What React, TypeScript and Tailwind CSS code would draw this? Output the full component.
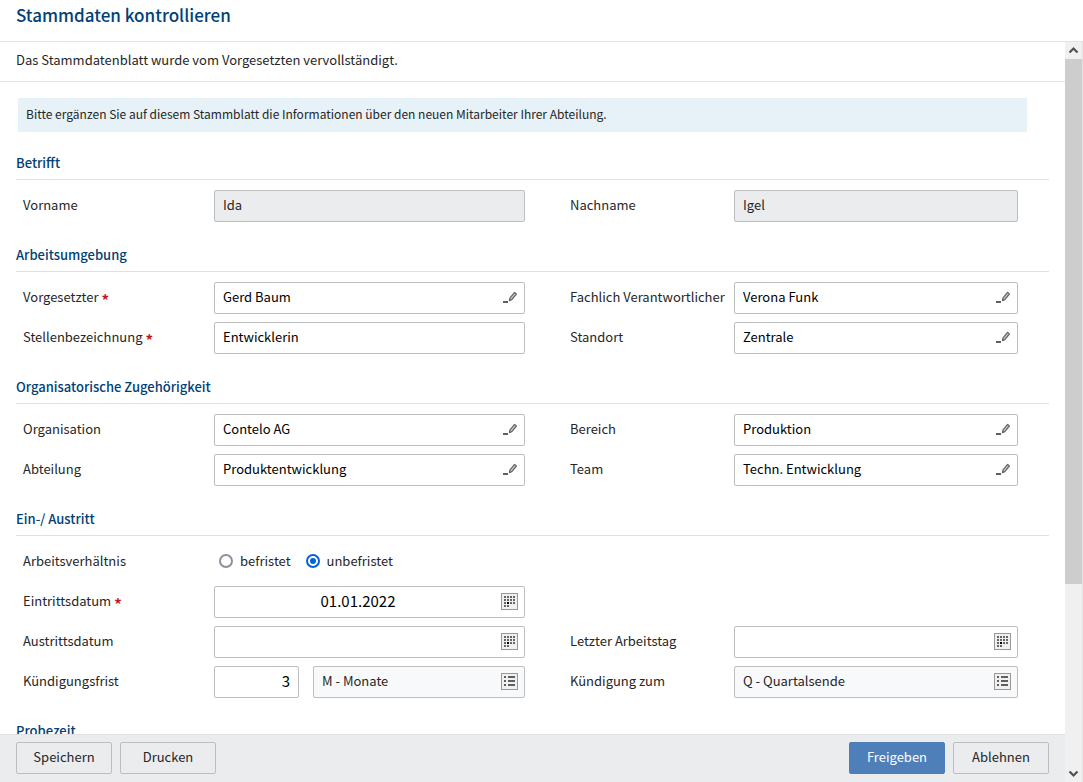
import type { ReactNode } from "react";

function PencilIcon() {
  return (
    <svg width="17" height="17" viewBox="0 0 17 17" aria-hidden="true">
      <rect x="2" y="12" width="5" height="2" fill="#5f5f5f" />
      <path d="M8.4 11.6 L9 8.8 L13.6 3.4 L15.4 5 L10.8 10.6 Z" fill="#c9c9c9" stroke="#636363" strokeWidth="1.2" strokeLinejoin="round" />
    </svg>
  );
}

const days = [
  [0, 0], [1, 0], [2, 0], [3, 0],
  [0, 1], [1, 1], [2, 1], [3, 1],
  [0, 2], [1, 2], [2, 2], [3, 2],
  [0, 3], [1, 3],
];

function CalendarIcon() {
  return (
    <svg width="17" height="17" viewBox="0 0 17 17" shapeRendering="crispEdges" aria-hidden="true">
      <rect x="0.5" y="0.5" width="16" height="16" fill="#f0f0f0" stroke="#999999" />
      {days.map(([c, r]) => (
        <rect key={`${c}-${r}`} x={3 + c * 3} y={3 + r * 3} width="2" height="2" fill={c === 1 && r === 2 ? "#000000" : "#666666"} />
      ))}
    </svg>
  );
}

function ListIcon() {
  return (
    <svg width="17" height="17" viewBox="0 0 17 17" shapeRendering="crispEdges" aria-hidden="true">
      <rect x="0.5" y="0.5" width="16" height="16" fill="#f0f0f0" stroke="#999999" />
      {[3, 7, 11].map((y) => (
        <g key={y} fill="#5f5f5f">
          <rect x="3" y={y} width="2" height="2" />
          <rect x="7" y={y} width="7" height="2" />
        </g>
      ))}
    </svg>
  );
}

type Kind = "text" | "readonly" | "picker" | "date" | "select" | "number";

function Control({ id, kind, value, label }: { id: string; kind: Kind; value: string; label?: string }) {
  if (kind === "select") {
    return (
      <div className="relative h-8 min-w-0 flex-1">
        <select id={id} aria-label={label} className="h-8 w-full appearance-none rounded-xs border border-[#bdbebf] bg-[#f8f9fb] pr-8 pb-0.5 pl-2 text-[#262626]">
          <option>{value}</option>
        </select>
        <span className="pointer-events-none absolute top-[7px] right-[7px]"><ListIcon /></span>
      </div>
    );
  }
  const tone = kind === "readonly" ? "bg-[#ebecee] text-[#262626]" : "bg-white text-black";
  const align = kind === "date" ? "text-center text-[15px]" : kind === "number" ? "text-right text-[15px]" : "text-left";
  return (
    <div className={`flex h-8 min-w-0 items-center rounded-xs border border-[#bdbebf] ${kind === "number" ? "w-[85px]" : "w-full"} ${tone}`}>
      <input id={id} type="text" defaultValue={value} readOnly={kind === "readonly"} className={`h-full min-w-0 flex-1 bg-transparent px-2 pb-1 outline-none ${align}`} />
      {kind === "picker" && (
        <button type="button" aria-label="Auswählen" className="mr-1.5 mb-0.5 shrink-0"><PencilIcon /></button>
      )}
      {kind === "date" && (
        <button type="button" aria-label="Kalender" className="mr-1.5 mb-0.5 shrink-0"><CalendarIcon /></button>
      )}
    </div>
  );
}

function Label({ htmlFor, second, required, children }: { htmlFor: string; second?: boolean; required?: boolean; children: ReactNode }) {
  return (
    <label htmlFor={htmlFor} className={`flex gap-[3px] leading-[30px] whitespace-nowrap ${second ? "pl-[45px]" : "pl-[7px]"}`}>
      {children}
      {required && <span className="pt-1 text-[15px] leading-7 font-bold text-[#c01818]">*</span>}
    </label>
  );
}

function Field({ id, label, kind, value = "", second, required }: { id: string; label: string; kind: Kind; value?: string; second?: boolean; required?: boolean }) {
  return (
    <>
      <Label htmlFor={id} second={second} required={required}>{label}</Label>
      <Control id={id} kind={kind} value={value} />
    </>
  );
}

function Section({ title, children }: { title: string; children?: ReactNode }) {
  return (
    <section>
      <h2 className="border-b border-[#dfe0e1] pb-1.5 leading-5 font-medium text-[#004177]">{title}</h2>
      <div className="grid grid-cols-[198px_minmax(0,311fr)_209px_minmax(0,284fr)] gap-y-2 pt-2.5 pr-[31px]">{children}</div>
    </section>
  );
}

function Radio({ label, checked }: { label: string; checked?: boolean }) {
  return (
    <label className="flex items-center gap-[7px] leading-[30px]">
      <input
        type="radio"
        name="vertrag"
        defaultChecked={checked}
        className="size-3.5 appearance-none rounded-full border-2 border-[#8f8f9d] bg-white checked:border-[#0060df] checked:bg-[#0060df] checked:bg-clip-content checked:p-0.5"
      />
      {label}
    </label>
  );
}

function Button({ children, primary }: { children: ReactNode; primary?: boolean }) {
  return (
    <button type="button" className={`h-8 w-24 rounded-xs border pb-0.5 ${primary ? "border-[#4f7fb9] bg-[#4f7fb9] text-white" : "border-[#bdbebf] bg-[#ebecee]"}`}>
      {children}
    </button>
  );
}

export default function App() {
  return (
    <div className="flex h-screen flex-col bg-white font-['Noto_Sans_CJK_SC',sans-serif] text-[13px] text-[#262626]">
      <header className="h-[42px] shrink-0 border-b border-[#e2e3e4] px-4">
        <h1 className="text-[17px] leading-[30px] font-medium text-[#004177]">Stammdaten kontrollieren</h1>
      </header>
      <div className="flex min-h-0 flex-1 border-r border-[#e2e3e4]">
        <div className="flex min-w-0 flex-1 flex-col">
          <main className="min-h-0 flex-1 overflow-y-auto [scrollbar-width:none]">
            <p className="border-b border-[#e2e3e4] px-4 pb-[3px] leading-9">Das Stammdatenblatt wurde vom Vorgesetzten vervollständigt.</p>
            <form className="px-4 pt-4">
              <p className="mr-[22px] ml-0.5 bg-[#e6f2f8] px-2 pb-0.5 text-xs leading-8">
                Bitte ergänzen Sie auf diesem Stammblatt die Informationen über den neuen Mitarbeiter Ihrer Abteilung.
              </p>
              <div className="flex flex-col gap-[23px] pt-[21px]">
                <Section title="Betrifft">
                  <Field id="vorname" label="Vorname" kind="readonly" value="Ida" />
                  <Field id="nachname" label="Nachname" kind="readonly" value="Igel" second />
                </Section>
                <Section title="Arbeitsumgebung">
                  <Field id="vorgesetzter" label="Vorgesetzter" kind="picker" value="Gerd Baum" required />
                  <Field id="fachlich" label="Fachlich Verantwortlicher" kind="picker" value="Verona Funk" second />
                  <Field id="stelle" label="Stellenbezeichnung" kind="text" value="Entwicklerin" required />
                  <Field id="standort" label="Standort" kind="picker" value="Zentrale" second />
                </Section>
                <Section title="Organisatorische Zugehörigkeit">
                  <Field id="organisation" label="Organisation" kind="picker" value="Contelo AG" />
                  <Field id="bereich" label="Bereich" kind="picker" value="Produktion" second />
                  <Field id="abteilung" label="Abteilung" kind="picker" value="Produktentwicklung" />
                  <Field id="team" label="Team" kind="picker" value="Techn. Entwicklung" second />
                </Section>
                <Section title="Ein-/ Austritt">
                  <span id="vertrag" className="pl-[7px] leading-[30px]">Arbeitsverhältnis</span>
                  <div role="radiogroup" aria-labelledby="vertrag" className="col-span-3 flex h-8 gap-[15px] pb-0.5 pl-[5px]">
                    <Radio label="befristet" />
                    <Radio label="unbefristet" checked />
                  </div>
                  <Field id="eintritt" label="Eintrittsdatum" kind="date" value="01.01.2022" required />
                  <div className="col-span-2" />
                  <Field id="austritt" label="Austrittsdatum" kind="date" />
                  <Field id="letzter" label="Letzter Arbeitstag" kind="date" second />
                  <Label htmlFor="frist">Kündigungsfrist</Label>
                  <div className="flex gap-3.5">
                    <Control id="frist" kind="number" value="3" />
                    <Control id="einheit" kind="select" value="M - Monate" label="Einheit" />
                  </div>
                  <Field id="zum" label="Kündigung zum" kind="select" value="Q - Quartalsende" second />
                </Section>
                <Section title="Probezeit" />
              </div>
            </form>
          </main>
          <footer className="flex h-12 shrink-0 items-start gap-2 border-t border-[#dfe0e1] bg-[#ebecee] px-4 pt-[7px]">
            <Button>Speichern</Button>
            <Button>Drucken</Button>
            <div className="flex-1" />
            <Button primary>Freigeben</Button>
            <Button>Ablehnen</Button>
          </footer>
        </div>
        <div className="flex w-[17px] shrink-0 flex-col bg-[#f0f0f0]" aria-hidden="true">
          <svg width="17" height="17" viewBox="0 0 17 17"><path d="M4.5 10.5 L8.5 6.5 L12.5 10.5" fill="none" stroke="#505050" strokeWidth="2.2" /></svg>
          <div className="flex min-h-0 flex-1 flex-col">
            <div className="h-[74.4%] bg-[#cdcdcd]" />
          </div>
          <svg width="17" height="17" viewBox="0 0 17 17"><path d="M4.5 6.5 L8.5 10.5 L12.5 6.5" fill="none" stroke="#505050" strokeWidth="2.2" /></svg>
        </div>
      </div>
    </div>
  );
}
